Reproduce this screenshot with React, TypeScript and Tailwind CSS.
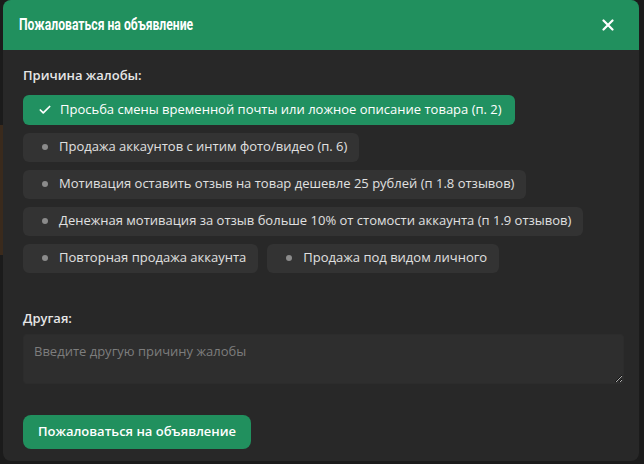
import React from "react";

const reasons: { text: string; selected?: boolean }[][] = [
  [{ text: "Просьба смены временной почты или ложное описание товара (п. 2)", selected: true }],
  [{ text: "Продажа аккаунтов с интим фото/видео (п. 6)" }],
  [{ text: "Мотивация оставить отзыв на товар дешевле 25 рублей (п 1.8 отзывов)" }],
  [{ text: "Денежная мотивация за отзыв больше 10% от стомости аккаунта (п 1.9 отзывов)" }],
  [{ text: "Повторная продажа аккаунта" }, { text: "Продажа под видом личного" }],
];

function Chip({ text, selected }: { text: string; selected?: boolean }) {
  return (
    <div
      className={
        selected
          ? "flex h-[30px] items-center gap-[8px] rounded-[6px] bg-[#219161] pl-[15px] pr-[13px] text-[13px] text-white"
          : "flex h-[29px] items-center gap-[8px] rounded-[6px] bg-[#333333] pl-[15px] pr-[12px] text-[13px] text-[#e0e0e0]"
      }
    >
      {selected ? (
        <svg width="14" height="14" viewBox="0 0 24 24" fill="none" stroke="white" strokeWidth="3" strokeLinecap="round" strokeLinejoin="round">
          <path d="M20 6 9 17l-5-5" />
        </svg>
      ) : (
        <span className="flex h-[13px] w-[13px] items-center justify-center">
          <span className="h-[6px] w-[6px] rounded-full bg-[#8b8b8b]" />
        </span>
      )}
      <span className="whitespace-nowrap">{text}</span>
    </div>
  );
}

export default function App() {
  return (
    <div
      className="relative h-[464px] w-[644px] overflow-hidden bg-[#1b1b1b]"
      style={{ fontFamily: '"Open Sans", "Noto Sans", sans-serif' }}
    >
      <div className="absolute left-0 top-[125px] h-[130px] w-[3px] bg-[#3a2a1c]" />
      <div className="ml-[3px] flex h-[461px] w-[636px] flex-col overflow-hidden rounded-[8px] bg-[#282828]">
        <div className="flex h-[50px] shrink-0 items-center justify-between bg-[#21905e] pl-[16px] pr-[25px]">
          <span
            className="origin-left scale-x-[0.76] whitespace-nowrap text-[16px] font-bold text-white"
            style={{ fontFamily: 'Roboto, "Noto Sans", sans-serif' }}
          >
            Пожаловаться на объявление
          </span>
          <svg width="12" height="12" viewBox="0 0 12 12" fill="none" stroke="white" strokeWidth="2.2" strokeLinecap="round">
            <path d="M1.5 1.5l9 9M10.5 1.5l-9 9" />
          </svg>
        </div>
        <div className="flex flex-1 flex-col px-[20px] pt-[16px]">
          <div className="text-[13px] font-semibold text-[#e6e6e6]">Причина жалобы:</div>
          <div className="mt-[9px] flex flex-col gap-[8px]">
            {reasons.map((row, i) => (
              <div key={i} className="flex gap-[9px]">
                {row.map((r) => (
                  <Chip key={r.text} text={r.text} selected={r.selected} />
                ))}
              </div>
            ))}
          </div>
          <div className="mt-[36px] text-[13px] font-semibold text-[#e6e6e6]">Другая:</div>
          <textarea
            className="mt-[6px] h-[50px] w-[601px] resize-y rounded-[3px] border border-[#2c2c2c] bg-[#2e2e2e] px-[10px] py-[7px] text-[13px] text-white outline-none placeholder:text-[#7d7d7d]"
            placeholder="Введите другую причину жалобы"
          />
          <button className="mt-[31px] h-[34px] w-[228px] rounded-[8px] bg-[#21905e] text-[13px] font-semibold text-white">
            Пожаловаться на объявление
          </button>
        </div>
      </div>
    </div>
  );
}
